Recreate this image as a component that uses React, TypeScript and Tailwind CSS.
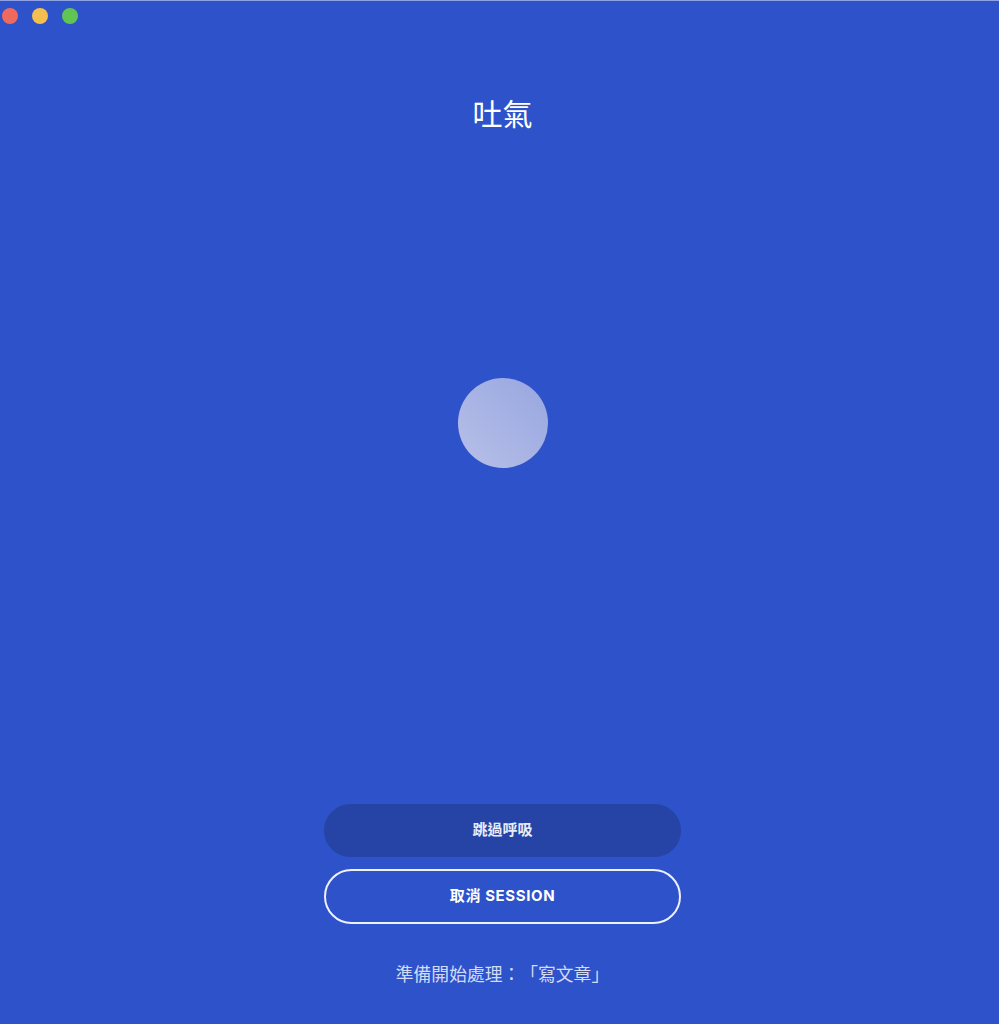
export default function App() {
  return (
    <div
      className="relative flex h-[1024px] w-full flex-col items-center border-t border-[#8fa2e6] bg-[#2e52c9] pl-[6px] text-white"
      style={{ fontFamily: '"Inter", "Noto Sans CJK TC", sans-serif' }}
    >
      <div className="-ml-[4px] flex gap-[14px] self-start pt-[7px]">
        <span className="h-4 w-4 rounded-full bg-[#ee6a5e]" />
        <span className="h-4 w-4 rounded-full bg-[#f5bf4f]" />
        <span className="h-4 w-4 rounded-full bg-[#61c554]" />
      </div>

      <h1 className="mt-[72px] text-[30px] leading-[36px] font-normal">吐氣</h1>

      <div className="mt-[246px] h-[90px] w-[90px] rounded-full bg-linear-to-tr from-[#b8c0e8] to-[#97a6e0]" />

      <div className="mt-[336px] flex w-[357px] flex-col gap-3">
        <button className="h-[53px] w-full rounded-full bg-[#2544a6] text-[15px] font-bold text-[#e8ecf8]">
          跳過呼吸
        </button>
        <button className="h-[55px] w-full rounded-full border-2 border-[#eef1fb] text-[15px] font-bold tracking-[0.04em] text-white">
          取消 SESSION
        </button>
      </div>

      <p className="mt-[39px] text-[17.8px] leading-6 text-[#d3dbf5] [text-spacing-trim:space-all]">
        準備開始處理：「寫文章」
      </p>
    </div>
  );
}
